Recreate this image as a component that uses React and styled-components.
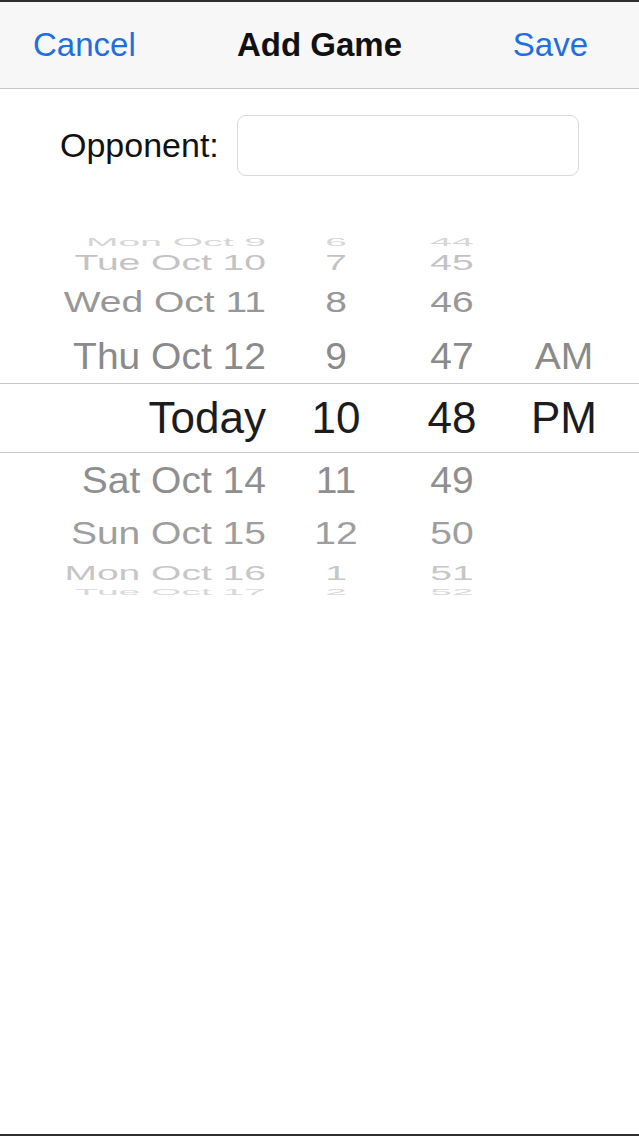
import React from 'react';
import styled, { createGlobalStyle } from 'styled-components';

const GlobalStyle = createGlobalStyle`
  html, body {
    margin: 0;
    padding: 0;
    background: #fff;
  }
  body {
    font-family: "Liberation Sans", Arial, sans-serif;
  }
`;

const SScreen = styled.div`
  width: 639px;
  height: 1136px;
  box-sizing: border-box;
  border-top: 2px solid #2f2f2f;
  border-bottom: 2px solid #2f2f2f;
  background: #fff;
  display: flex;
  flex-direction: column;
  overflow: hidden;
`;

const SNavBar = styled.header`
  display: grid;
  grid-template-columns: 1fr auto 1fr;
  align-items: center;
  height: 87px;
  box-sizing: border-box;
  padding: 0 33px;
  background: #f7f7f8;
  border-bottom: 1px solid #c9c9cc;
  font-size: 33px;
`;

const SNavButton = styled.button`
  justify-self: ${(p) => (p.$end ? 'end' : 'start')};
  margin-right: ${(p) => (p.$end ? 18 : 0)}px;
  border: none;
  background: none;
  padding: 0;
  font: inherit;
  color: #1f6fde;
`;

const STitle = styled.h1`
  margin: 0;
  font-size: 33px;
  font-weight: 700;
  color: #111;
`;

const SField = styled.div`
  display: flex;
  align-items: center;
  gap: 18px;
  padding: 26px 0 0 60px;
`;

const SLabel = styled.label`
  font-size: 34px;
  color: #111;
`;

const SInput = styled.input`
  width: 342px;
  height: 61px;
  box-sizing: border-box;
  border: 1px solid #d9d9dc;
  border-radius: 9px;
  outline: none;
  font: inherit;
  font-size: 30px;
  padding: 0 12px;
`;

const SPicker = styled.div`
  display: flex;
  flex-direction: column;
  margin-top: 59px;
`;

const SRow = styled.div`
  display: grid;
  grid-template-columns: 266px 140px 92px 132px;
  height: ${(p) => p.$h}px;
  line-height: ${(p) => p.$h - (p.$selected ? 2 : 0)}px;
  box-sizing: border-box;
  color: ${(p) => p.$color};
  font-size: ${(p) => (p.$selected ? 44 : 39)}px;
  ${(p) =>
    p.$selected &&
    `
    border-top: 1px solid #c8c7cc;
    border-bottom: 1px solid #c8c7cc;
  `}
`;

const SCell = styled.span`
  display: block;
  white-space: nowrap;
  text-align: ${(p) => (p.$right ? 'right' : 'center')};
  transform: scaleY(${(p) => p.$scale});
`;

const ROWS = [
  { date: 'Mon Oct 9', hour: '6', minute: '44', h: 14, scale: 0.3, color: '#d6d6d6' },
  { date: 'Tue Oct 10', hour: '7', minute: '45', h: 27, scale: 0.57, color: '#c3c3c3' },
  { date: 'Wed Oct 11', hour: '8', minute: '46', h: 52, scale: 0.76, color: '#979797' },
  { date: 'Thu Oct 12', hour: '9', minute: '47', ampm: 'AM', h: 55, scale: 0.97, color: '#8a8a8a' },
  { date: 'Today', hour: '10', minute: '48', ampm: 'PM', h: 70, scale: 1, color: '#1c1c1e', selected: true },
  { date: 'Sat Oct 14', hour: '11', minute: '49', h: 55, scale: 0.95, color: '#8f8f8f' },
  { date: 'Sun Oct 15', hour: '12', minute: '50', h: 52, scale: 0.78, color: '#9e9e9e' },
  { date: 'Mon Oct 16', hour: '1', minute: '51', h: 25, scale: 0.54, color: '#c6c6c6' },
  { date: 'Tue Oct 17', hour: '2', minute: '52', h: 14, scale: 0.25, color: '#d8d8d8' },
];

function App() {
  return (
    <>
      <GlobalStyle />
      <SScreen>
        <SNavBar>
          <SNavButton type="button">Cancel</SNavButton>
          <STitle>Add Game</STitle>
          <SNavButton type="button" $end>
            Save
          </SNavButton>
        </SNavBar>
        <SField>
          <SLabel htmlFor="opponent">Opponent:</SLabel>
          <SInput id="opponent" type="text" />
        </SField>
        <SPicker>
          {ROWS.map((row) => (
            <SRow key={row.date} $h={row.h} $color={row.color} $selected={row.selected}>
              <SCell $right $scale={row.scale}>
                {row.date}
              </SCell>
              <SCell $scale={row.scale}>{row.hour}</SCell>
              <SCell $scale={row.scale}>{row.minute}</SCell>
              <SCell $scale={row.scale}>{row.ampm}</SCell>
            </SRow>
          ))}
        </SPicker>
      </SScreen>
    </>
  );
}

export default App;
